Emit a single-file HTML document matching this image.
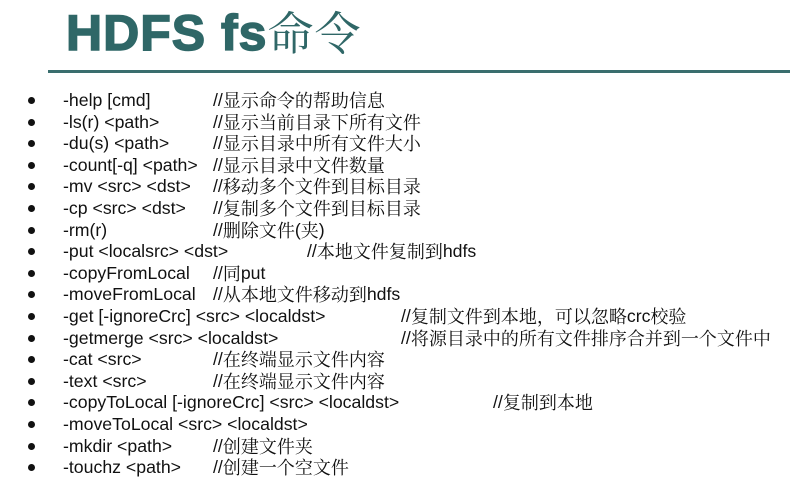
<!DOCTYPE html>
<html><head><meta charset="utf-8"><style>
body{margin:0;width:790px;height:489px;background:#fff;position:relative;overflow:hidden;font-family:"Liberation Sans",sans-serif;color:#111}
.t{position:absolute;left:66px;top:-2px;font-size:50px;font-weight:bold;color:#2f6767;letter-spacing:1px;white-space:nowrap;-webkit-text-stroke:1.5px #2f6767}
.t span{font-family:"Noto Serif CJK SC",serif;font-weight:normal;font-size:46px;-webkit-text-stroke:0}
.hr{position:absolute;left:48px;top:70px;width:742px;height:3px;background:#3a6e6e}
.r{position:absolute;left:0;height:22px;font-size:17.7px;line-height:22px;white-space:nowrap}
.b{position:absolute;left:28px;top:8px;width:7px;height:7px;border-radius:50%;background:#111}
.c{position:absolute;left:63px;top:0;line-height:22px}
.m{position:absolute;top:0;line-height:22px;height:22px}
.m i{font-style:normal;font-family:"Noto Serif CJK SC",serif;font-size:18px;line-height:22px;vertical-align:top}
</style></head><body>
<div class="t">HDFS fs<span>命令</span></div>
<div class="hr"></div>
<div class="r" style="top:89px"><div class="b"></div><div class="c">-help [cmd]</div><div class="m" style="left:213px">//<i>显示命令的帮助信息</i></div></div>
<div class="r" style="top:110.6px"><div class="b"></div><div class="c">-ls(r) &lt;path&gt;</div><div class="m" style="left:213px">//<i>显示当前目录下所有文件</i></div></div>
<div class="r" style="top:132.2px"><div class="b"></div><div class="c">-du(s) &lt;path&gt;</div><div class="m" style="left:213px">//<i>显示目录中所有文件大小</i></div></div>
<div class="r" style="top:153.8px"><div class="b"></div><div class="c">-count[-q] &lt;path&gt;</div><div class="m" style="left:213px">//<i>显示目录中文件数量</i></div></div>
<div class="r" style="top:175.4px"><div class="b"></div><div class="c">-mv &lt;src&gt; &lt;dst&gt;</div><div class="m" style="left:213px">//<i>移动多个文件到目标目录</i></div></div>
<div class="r" style="top:197px"><div class="b"></div><div class="c">-cp &lt;src&gt; &lt;dst&gt;</div><div class="m" style="left:213px">//<i>复制多个文件到目标目录</i></div></div>
<div class="r" style="top:218.6px"><div class="b"></div><div class="c">-rm(r)</div><div class="m" style="left:213px">//<i>删除文件</i>(<i>夹</i>)</div></div>
<div class="r" style="top:240.2px"><div class="b"></div><div class="c">-put &lt;localsrc&gt; &lt;dst&gt;</div><div class="m" style="left:307px">//<i>本地文件复制到</i>hdfs</div></div>
<div class="r" style="top:261.8px"><div class="b"></div><div class="c">-copyFromLocal</div><div class="m" style="left:213px">//<i>同</i>put</div></div>
<div class="r" style="top:283.4px"><div class="b"></div><div class="c">-moveFromLocal</div><div class="m" style="left:213px">//<i>从本地文件移动到</i>hdfs</div></div>
<div class="r" style="top:305px"><div class="b"></div><div class="c">-get [-ignoreCrc] &lt;src&gt; &lt;localdst&gt;</div><div class="m" style="left:401px">//<i>复制文件到本地，可以忽略</i>crc<i>校验</i></div></div>
<div class="r" style="top:326.6px"><div class="b"></div><div class="c">-getmerge &lt;src&gt; &lt;localdst&gt;</div><div class="m" style="left:401px">//<i>将源目录中的所有文件排序合并到一个文件中</i></div></div>
<div class="r" style="top:348.2px"><div class="b"></div><div class="c">-cat &lt;src&gt;</div><div class="m" style="left:213px">//<i>在终端显示文件内容</i></div></div>
<div class="r" style="top:369.8px"><div class="b"></div><div class="c">-text &lt;src&gt;</div><div class="m" style="left:213px">//<i>在终端显示文件内容</i></div></div>
<div class="r" style="top:391.4px"><div class="b"></div><div class="c">-copyToLocal [-ignoreCrc] &lt;src&gt; &lt;localdst&gt;</div><div class="m" style="left:493px">//<i>复制到本地</i></div></div>
<div class="r" style="top:413px"><div class="b"></div><div class="c">-moveToLocal &lt;src&gt; &lt;localdst&gt;</div></div>
<div class="r" style="top:434.6px"><div class="b"></div><div class="c">-mkdir &lt;path&gt;</div><div class="m" style="left:213px">//<i>创建文件夹</i></div></div>
<div class="r" style="top:456.2px"><div class="b"></div><div class="c">-touchz &lt;path&gt;</div><div class="m" style="left:213px">//<i>创建一个空文件</i></div></div>
</body></html>
